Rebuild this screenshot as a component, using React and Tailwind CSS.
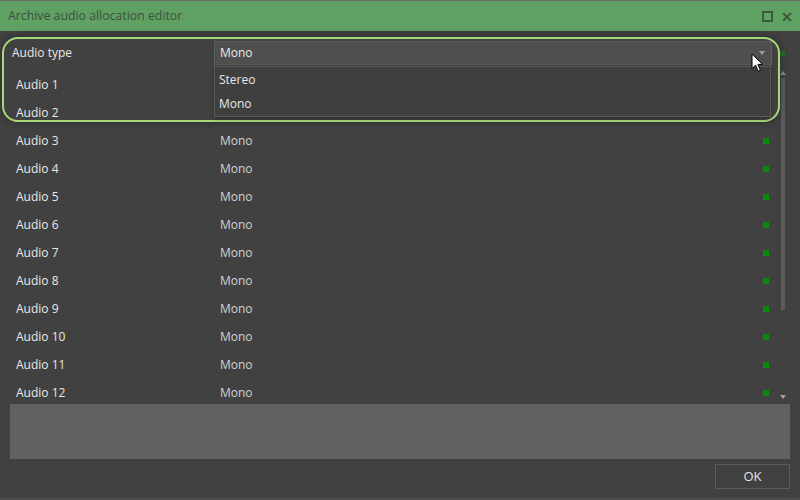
import { useState } from 'react'

const rows = Array.from({ length: 12 }, (_, i) => ({ name: `Audio ${i + 1}`, type: 'Mono' }))

function Cursor() {
  return (
    <svg width="13" height="20" viewBox="0 0 13 20" className="absolute left-[751px] top-[52px]">
      <path
        d="M1 1 L1 15.5 L4.6 12.2 L7.2 18.2 L9.4 17.2 L6.9 11.4 L11.6 11.4 Z"
        fill="#ffffff"
        stroke="#000000"
        strokeWidth="1"
        strokeLinejoin="round"
      />
    </svg>
  )
}

function App() {
  const [value] = useState('Mono')

  return (
    <div
      className="relative flex h-[500px] w-[800px] flex-col overflow-hidden border-t border-b-2 border-t-[#6c6c6c] border-b-[#4c4c4c] bg-[#414141] text-[12px] text-[#e8e8e8]"
      style={{ fontFamily: '"Open Sans", "Noto Sans", sans-serif' }}
    >
      <div className="flex h-[30px] shrink-0 items-center justify-between bg-[#5fa162] pl-[8px] pr-[8px]">
        <span className="text-[12.3px] text-[#3d503e]">Archive audio allocation editor</span>
        <div className="flex items-center gap-[9px] pt-[1px]">
          <svg width="11" height="11" viewBox="0 0 11 11">
            <rect x="1" y="1" width="9" height="9" fill="none" stroke="#3d5a3f" strokeWidth="2" />
          </svg>
          <svg width="10" height="10" viewBox="0 0 10 10">
            <path d="M1 1 L9 9 M9 1 L1 9" stroke="#3d5a3f" strokeWidth="1.8" />
          </svg>
        </div>
      </div>

      <div className="relative flex flex-1 flex-col">
        <div className="flex h-[40px] shrink-0 items-center pt-[4px]">
          <span className="w-[214px] pl-[12px]">Audio type</span>
          <div className="flex h-[24px] w-[558px] items-center justify-between border border-[#5d5d5d] bg-[#4f4f4f] pl-[5px] pr-[6px]">
            <span>{value}</span>
            <svg width="6" height="4" viewBox="0 0 6 4">
              <path d="M0 0 H6 L3 4 Z" fill="#9a9a9a" />
            </svg>
          </div>
          <div className="ml-[8px] h-[5px] w-[5px] bg-[#2b6a2b]" />
        </div>

        <div className="flex h-[333px] shrink-0">
          <div className="flex-1 overflow-hidden">
            {rows.map((row) => (
              <div key={row.name} className="flex h-[28px] items-center">
                <span className="w-[220px] pl-[16px]">{row.name}</span>
                <span className="flex-1 text-[#d2d2d2]">{row.type}</span>
                <div className="mr-[8px] h-[6px] w-[6px] bg-[#0a890a]" />
              </div>
            ))}
          </div>
          <div className="flex w-[13px] flex-col items-center pr-[1px]">
            <svg width="6" height="4" viewBox="0 0 6 4">
              <path d="M3 0 L6 4 H0 Z" fill="#8c8c8c" />
            </svg>
            <div className="mt-[3px] h-[232px] w-[4px] bg-[#5c5c5c]" />
            <div className="flex-1" />
            <svg width="6" height="4" viewBox="0 0 6 4" className="mb-[5px]">
              <path d="M0 0 H6 L3 4 Z" fill="#a0a0a0" />
            </svg>
          </div>
          <div className="w-[10px]" />
        </div>

        <div className="mx-[10px] h-[55px] shrink-0 bg-[#616161]" />

        <div className="flex justify-end pr-[10px] pt-[5px]">
          <button className="flex h-[25px] w-[75px] items-center justify-center border border-[#5c5c5c] bg-[#414141] text-[13px] text-[#e2e2e2]">
            OK
          </button>
        </div>

        <div className="absolute left-[2px] top-[6px] h-[85px] w-[778px] rounded-[16px] border-2 border-[#a8d87c] shadow-[0_0_8px_rgba(0,0,0,0.35)]" />

        <div className="absolute left-[214px] top-[35px] w-[557px] border border-[#595959] bg-[#3f3f3f] pt-[1px] shadow-[0_2px_4px_rgba(0,0,0,0.3)]">
          <div className="flex h-[24px] items-center pl-[4px]">Stereo</div>
          <div className="flex h-[24px] items-center pl-[4px]">Mono</div>
        </div>
      </div>

      <Cursor />
    </div>
  )
}

export default App
